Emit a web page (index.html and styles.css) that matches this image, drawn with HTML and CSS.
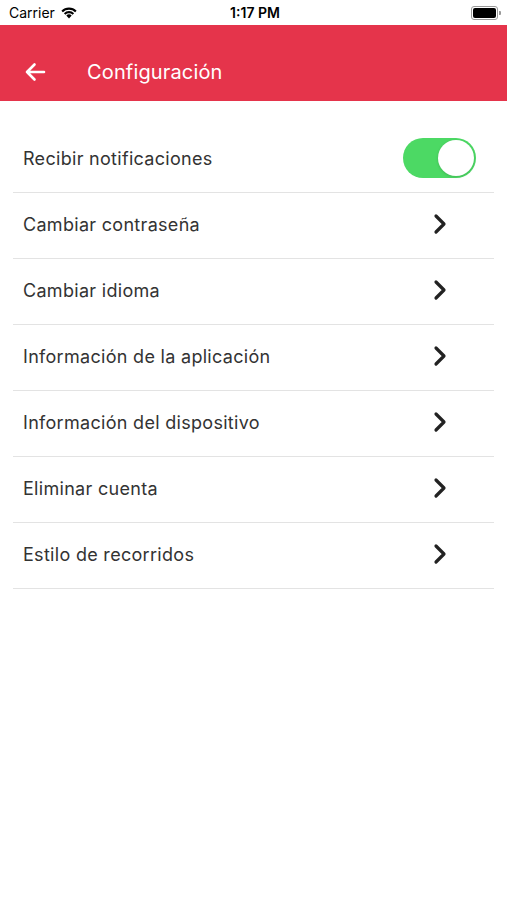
FILE: index.html
```html
<!DOCTYPE html>
<html lang="es">
<head>
    <meta charset="UTF-8">
    <meta name="viewport" content="width=device-width, initial-scale=1.0">
    <title>Configuración</title>
    <link rel="stylesheet" href="styles.css">
</head>
<body>

    <div class="status-bar">
        <div class="status-left">
            <span>Carrier</span>
            <svg class="wifi" width="18" height="13" viewBox="0 0 18 13">
                <path d="M9 12.5 L6.3 9.6 A3.9 3.9 0 0 1 11.7 9.6 Z" fill="#000"/>
                <path d="M3.9 7.2 A7.3 7.3 0 0 1 14.1 7.2 L12.6 8.7 A5.2 5.2 0 0 0 5.4 8.7 Z" fill="#000"/>
                <path d="M1.4 4.7 A10.8 10.8 0 0 1 16.6 4.7 L15.1 6.2 A8.7 8.7 0 0 0 2.9 6.2 Z" fill="#000"/>
            </svg>
        </div>
        <div class="status-time">1:17 PM</div>
        <div class="status-right">
            <div class="battery"><div class="battery-level"></div></div>
            <div class="battery-nub"></div>
        </div>
    </div>

    <div class="app-bar">
        <svg class="back" width="22" height="20" viewBox="0 0 22 20">
            <path d="M20 10 H3 M10.5 2.5 L3 10 L10.5 17.5" fill="none" stroke="#fff" stroke-width="2.6" stroke-linecap="round" stroke-linejoin="round"/>
        </svg>
        <h1>Configuración</h1>
    </div>

    <ul class="settings">
        <li class="settings-item">
            <span>Recibir notificaciones</span>
            <div class="switch on"><div class="knob"></div></div>
        </li>
        <li class="settings-item link"><span>Cambiar contraseña</span><svg class="chevron" width="16" height="24" viewBox="0 0 16 24"><path d="M4 4 L12 12 L4 20" fill="none" stroke="#222" stroke-width="3.2" stroke-linecap="round" stroke-linejoin="round"/></svg></li>
        <li class="settings-item link"><span>Cambiar idioma</span><svg class="chevron" width="16" height="24" viewBox="0 0 16 24"><path d="M4 4 L12 12 L4 20" fill="none" stroke="#222" stroke-width="3.2" stroke-linecap="round" stroke-linejoin="round"/></svg></li>
        <li class="settings-item link"><span>Información de la aplicación</span><svg class="chevron" width="16" height="24" viewBox="0 0 16 24"><path d="M4 4 L12 12 L4 20" fill="none" stroke="#222" stroke-width="3.2" stroke-linecap="round" stroke-linejoin="round"/></svg></li>
        <li class="settings-item link"><span>Información del dispositivo</span><svg class="chevron" width="16" height="24" viewBox="0 0 16 24"><path d="M4 4 L12 12 L4 20" fill="none" stroke="#222" stroke-width="3.2" stroke-linecap="round" stroke-linejoin="round"/></svg></li>
        <li class="settings-item link"><span>Eliminar cuenta</span><svg class="chevron" width="16" height="24" viewBox="0 0 16 24"><path d="M4 4 L12 12 L4 20" fill="none" stroke="#222" stroke-width="3.2" stroke-linecap="round" stroke-linejoin="round"/></svg></li>
        <li class="settings-item link"><span>Estilo de recorridos</span><svg class="chevron" width="16" height="24" viewBox="0 0 16 24"><path d="M4 4 L12 12 L4 20" fill="none" stroke="#222" stroke-width="3.2" stroke-linecap="round" stroke-linejoin="round"/></svg></li>
    </ul>

</body>
</html>
```

FILE: styles.css
```css
body {
    font-family: 'Inter', 'Liberation Sans', sans-serif;
    background-color: #fff;
    margin: 0;
    padding: 0;
    color: #333;
}

/* Barra de estado */
.status-bar {
    height: 25px;
    display: flex;
    align-items: center;
    justify-content: space-between;
    padding: 0 6px 0 9px;
    font-size: 14px;
    color: #000;
}
.status-left {
    display: flex;
    align-items: center;
    gap: 5px;
    width: 120px;
}
.status-time {
    font-weight: 600;
    font-size: 14px;
}
.status-right {
    width: 120px;
    display: flex;
    justify-content: flex-end;
    align-items: center;
}
.battery {
    width: 23px;
    height: 10px;
    border: 1px solid #999;
    border-radius: 3px;
    padding: 1px;
}
.battery-level {
    width: 100%;
    height: 100%;
    background-color: #000;
    border-radius: 2px;
}
.battery-nub {
    width: 2px;
    height: 4px;
    background-color: #999;
    border-radius: 0 1px 1px 0;
    margin-left: 1px;
}

/* Cabecera */
.app-bar {
    height: 58px;
    padding: 18px 0 0 24px;
    background-color: #e5344b;
    display: flex;
    align-items: center;
    gap: 41px;
}
.app-bar h1 {
    margin: 0;
    font-size: 20px;
    font-weight: 400;
    color: #fff;
    letter-spacing: 0.15px;
}

/* Lista de opciones */
.settings {
    list-style: none;
    margin: 26px 13px 0;
    padding: 0;
}
.settings-item {
    height: 62px;
    padding: 0 18px 3px 10px;
    border-bottom: 1px solid #e3e3e3;
    display: flex;
    align-items: center;
    justify-content: space-between;
    font-size: 18px;
    letter-spacing: 0.3px;
    color: #333;
}
.settings-item.link {
    padding-right: 46px;
}

.switch {
    width: 73px;
    height: 40px;
    border-radius: 20px;
    background-color: #e5e5ea;
    position: relative;
    margin-top: -1px;
}
.switch.on {
    background-color: #4cd964;
}
.switch .knob {
    position: absolute;
    top: 2px;
    right: 2px;
    width: 36px;
    height: 36px;
    border-radius: 50%;
    background-color: #fff;
    box-shadow: 0 1px 3px rgba(0, 0, 0, 0.15);
}
```
